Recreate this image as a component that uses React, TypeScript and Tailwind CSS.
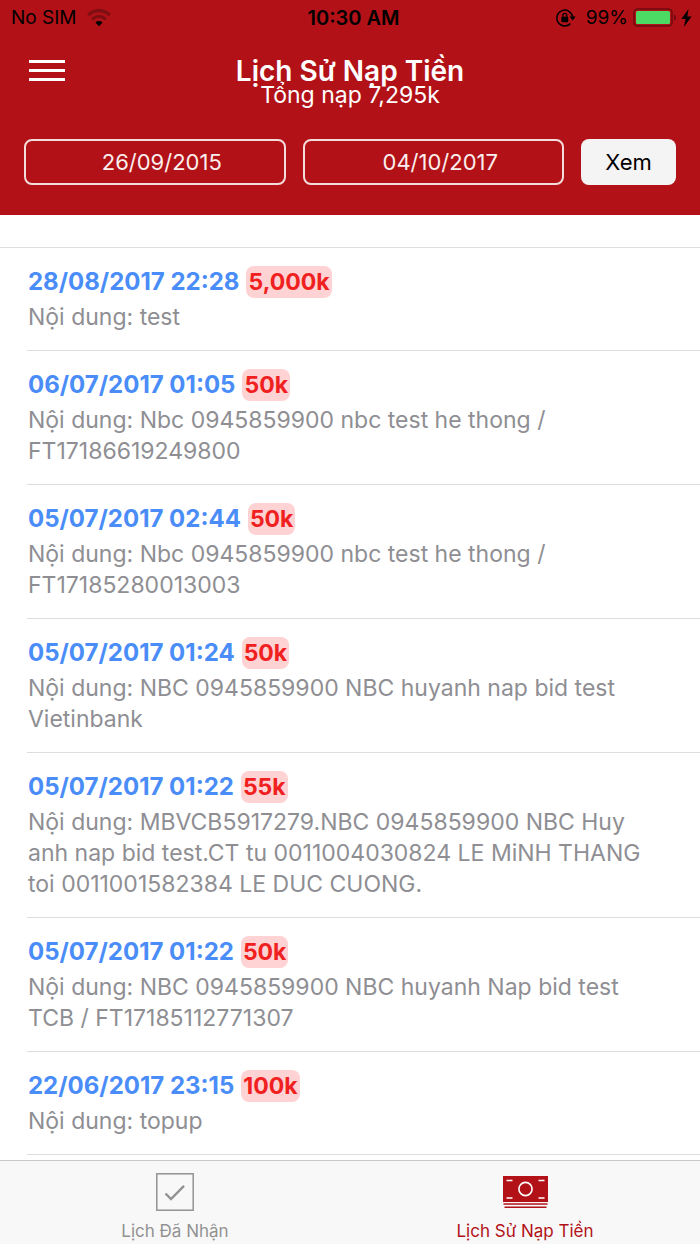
import { useState } from "react";

type Topup = {
	id: number;
	time: string;
	amount: string;
	note: string;
};

const topups: Topup[] = [
	{ id: 1, time: "28/08/2017 22:28", amount: "5,000k", note: "test" },
	{ id: 2, time: "06/07/2017 01:05", amount: "50k", note: "Nbc 0945859900 nbc test he thong / FT17186619249800" },
	{ id: 3, time: "05/07/2017 02:44", amount: "50k", note: "Nbc 0945859900 nbc test he thong / FT17185280013003" },
	{ id: 4, time: "05/07/2017 01:24", amount: "50k", note: "NBC 0945859900 NBC huyanh nap bid test Vietinbank" },
	{
		id: 5,
		time: "05/07/2017 01:22",
		amount: "55k",
		note: "MBVCB5917279.NBC 0945859900 NBC Huy anh nap bid test.CT tu 0011004030824 LE MiNH THANG toi 0011001582384 LE DUC CUONG.",
	},
	{ id: 6, time: "05/07/2017 01:22", amount: "50k", note: "NBC 0945859900 NBC huyanh Nap bid test TCB / FT17185112771307" },
	{ id: 7, time: "22/06/2017 23:15", amount: "100k", note: "topup" },
];

function WifiIcon() {
	return (
		<svg width="24" height="18" viewBox="0 0 24 18" fill="none" aria-hidden="true">
			<path d="M1.2 6.2a15.2 15.2 0 0 1 21.6 0" stroke="#7d0e12" strokeWidth="3.2" />
			<path d="M5.2 10.4a9.6 9.6 0 0 1 13.6 0" stroke="#7d0e12" strokeWidth="3" />
			<path d="M8.4 13.4a5.2 5.2 0 0 1 7.2 0L12 17.2z" fill="#000" />
		</svg>
	);
}

function RotationLockIcon() {
	return (
		<svg width="20" height="18" viewBox="0 0 20 18" fill="none" aria-hidden="true">
			<path d="M14.4 14.6A7.9 7.9 0 1 1 16.6 8" stroke="#000" strokeWidth="1.5" />
			<path d="M13.6 7.6h6l-3 3.8z" fill="#000" />
			<rect x="5.4" y="7.8" width="6.8" height="5.4" rx=".6" fill="#000" />
			<path d="M6.9 8.4V6.2a1.9 1.9 0 0 1 3.8 0v2.2" stroke="#000" strokeWidth="1.3" />
		</svg>
	);
}

function BatteryIcon() {
	return (
		<svg width="44" height="20" viewBox="0 0 44 20" fill="none" aria-hidden="true">
			<rect x="1" y="1" width="38" height="17" rx="3.5" stroke="#6f0b0f" strokeWidth="1.5" />
			<rect x="3" y="3" width="34" height="13" rx="1.5" fill="#4cd964" />
			<path d="M41 6.5c2.6.8 2.6 5.2 0 6z" fill="#6f0b0f" />
		</svg>
	);
}

function BoltIcon() {
	return (
		<svg width="11" height="18" viewBox="0 0 11 18" aria-hidden="true">
			<path d="M7.6 0 .4 10h4.2L2.9 18 10.6 7.4H6.3z" />
		</svg>
	);
}

function CheckIcon() {
	return (
		<svg width="38" height="38" viewBox="0 0 38 38" fill="none" stroke="currentColor" aria-hidden="true">
			<rect x=".8" y=".8" width="36.4" height="36.4" strokeWidth="1.5" />
			<path d="m9.5 20.5 5.5 5.5L28 12.8" strokeWidth="2.4" />
		</svg>
	);
}

function CashIcon() {
	return (
		<svg width="45" height="33" viewBox="0 0 45 33" fill="none" aria-hidden="true">
			<path d="M0 0h45v26H0zM.5 27.2h44v1.6H.5zM1.5 30.4h42V32h-42z" fill="currentColor" />
			<circle cx="22.5" cy="13" r="6.6" stroke="#fff" strokeWidth="1.6" />
			<path d="M3.5 4.5h6M35.5 4.5h6M3.5 22h6M35.5 22h6" stroke="#fff" strokeWidth="1.6" />
		</svg>
	);
}

function StatusBar() {
	return (
		<div className="grid grid-cols-3 items-center pt-1 pr-2 pl-[11px] text-[19px] leading-7 text-black">
			<div className="flex items-center gap-2.5">
				<span>No SIM</span>
				<WifiIcon />
			</div>
			<div className="pl-1 text-center text-xl leading-7 font-semibold">10:30 AM</div>
			<div className="flex items-center justify-end gap-1">
				<RotationLockIcon />
				<span className="pr-px pl-1.5">99%</span>
				<BatteryIcon />
				<BoltIcon />
			</div>
		</div>
	);
}

function TopupRow({ item }: { item: Topup }) {
	return (
		<li className="border-b border-[#dedede] pt-[18px] pr-10 pb-[17px] pl-px">
			<h2 className="flex items-center gap-[7px] text-2xl leading-8 font-bold text-[#4a8df8]">
				<time>{item.time}</time>
				<span className="rounded-lg bg-[#ffd2d3] px-0.5 text-[23px] leading-8 text-[#f02020]">{item.amount}</span>
			</h2>
			<p className="mt-1 text-[23px] leading-[31px] text-[#8e8e93]">Nội dung: {item.note}</p>
		</li>
	);
}

export default function App() {
	const [from, setFrom] = useState("26/09/2015");
	const [to, setTo] = useState("04/10/2017");

	const dateClass =
		"h-[46px] min-w-0 flex-1 rounded-lg border-2 border-[#f4dcdc] bg-transparent pl-3.5 text-center text-[22px] text-[#fbeeee] outline-none";

	return (
		<div className="flex h-screen flex-col bg-white font-['Inter','Noto_Sans',sans-serif]">
			<header className="bg-[#b21217] pb-[30px]">
				<StatusBar />
				<div className="grid grid-cols-[1fr_auto_1fr] pt-5">
					<button type="button" aria-label="Menu" className="flex h-9 w-24 flex-col justify-center gap-[6px] pl-[29px]">
						<span className="h-[3px] w-9 bg-white" />
						<span className="h-[3px] w-9 bg-white" />
						<span className="h-[3px] w-9 bg-white" />
					</button>
					<div className="text-center text-white">
						<h1 className="text-[28px] leading-[38px] font-semibold">Lịch Sử Nạp Tiền</h1>
						<p className="-mt-[9px] text-[23px] leading-7">Tổng nạp 7,295k</p>
					</div>
				</div>
				<form className="flex gap-[17px] px-6 pt-[30px]" onSubmit={(e) => e.preventDefault()}>
					<input aria-label="Từ ngày" className={dateClass} value={from} onChange={(e) => setFrom(e.target.value)} />
					<input aria-label="Đến ngày" className={dateClass} value={to} onChange={(e) => setTo(e.target.value)} />
					<button type="submit" className="h-[46px] w-[95px] rounded-lg bg-[#f4f4f4] text-[22px] text-black">
						Xem
					</button>
				</form>
			</header>

			<main className="min-h-0 flex-1 overflow-y-auto">
				<div className="h-[33px] border-b border-[#dedede]" />
				<ul className="pl-[27px]">
					{topups.map((item) => (
						<TopupRow key={item.id} item={item} />
					))}
				</ul>
			</main>

			<nav className="grid grid-cols-2 border-t border-[#c8c8c8] bg-[#f8f8f8] pb-px text-[17px] leading-6">
				<a href="#received" className="flex flex-col items-center pt-3 text-[#929292]">
					<span className="flex h-[46px] items-start">
						<CheckIcon />
					</span>
					Lịch Đã Nhận
				</a>
				<a href="#topups" aria-current="page" className="flex flex-col items-center pt-3 text-[#b21217]">
					<span className="flex h-[46px] items-start pt-[3px]">
						<CashIcon />
					</span>
					Lịch Sử Nạp Tiền
				</a>
			</nav>
		</div>
	);
}
